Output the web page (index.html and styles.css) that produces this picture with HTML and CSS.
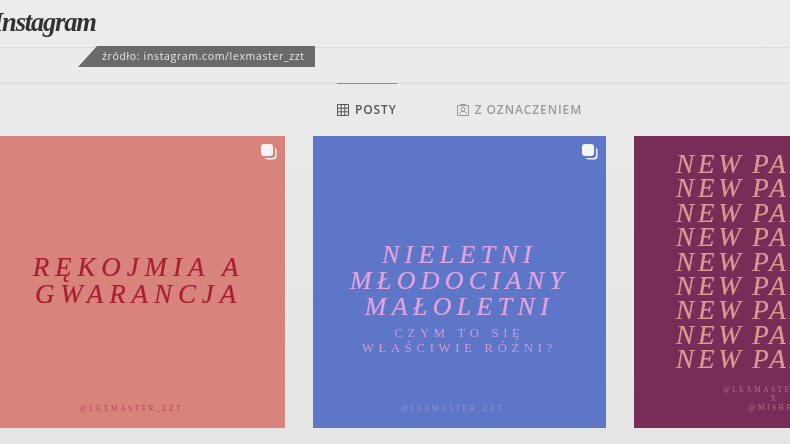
FILE: index.html
```html
<!DOCTYPE html>
<html lang="pl">
<head>
<meta charset="utf-8">
<title>Instagram</title>
<link rel="stylesheet" href="styles.css">
</head>
<body>
<div class="page">
  <header class="topbar"><span class="logo">Instagram</span></header>
  <div class="source">źródło: instagram.com/lexmaster_zzt</div>
  <div class="strip"></div>
  <main class="profile">
    <nav class="tabs">
      <a class="tab active">
        <svg class="tab-icon" viewBox="0 0 12 12"><path d="M.5.5h11v11H.5zM.5 4.2h11M.5 7.8h11M4.2.5v11M7.8.5v11" fill="none" stroke="currentColor"/></svg>
        <span>POSTY</span>
      </a>
      <a class="tab">
        <svg class="tab-icon" viewBox="0 0 12 12"><path d="M.5 1.5h11v10H.5zM3.5 1.5V.5h5v1" fill="none" stroke="currentColor"/><circle cx="6" cy="5.2" r="2" fill="none" stroke="currentColor"/><path d="M2.6 9.8c.6-1.8 1.8-2.4 3.4-2.4s2.8.6 3.4 2.4" fill="none" stroke="currentColor"/></svg>
        <span>Z OZNACZENIEM</span>
      </a>
    </nav>
    <section class="grid">
      <article class="tile tile-red">
        <span class="stack"></span>
        <h2 class="head">RĘKOJMIA A<br>GWARANCJA</h2>
        <p class="handle">@LEXMASTER_ZZT</p>
      </article>
      <article class="tile tile-blue">
        <span class="stack"></span>
        <h2 class="head">NIELETNI<br>MŁODOCIANY<br>MAŁOLETNI</h2>
        <p class="sub">CZYM TO SIĘ<br>WŁAŚCIWIE RÓŻNI?</p>
        <p class="handle">@LEXMASTER_ZZT</p>
      </article>
      <article class="tile tile-plum">
        <h2 class="head">NEW PARTNER<br>NEW PARTNER<br>NEW PARTNER<br>NEW PARTNER<br>NEW PARTNER<br>NEW PARTNER<br>NEW PARTNER<br>NEW PARTNER<br>NEW PARTNER</h2>
        <p class="handle">@LEXMASTER_ZZT<br>X<br>@MISHEL</p>
      </article>
    </section>
  </main>
</div>
</body>
</html>
```
FILE: styles.css
```css
html, body { margin: 0; padding: 0; background: #e8e8e8; }
.page {
  position: relative;
  width: 790px;
  height: 444px;
  overflow: hidden;
  background: linear-gradient(#ececec, #e5e5e5);
  font-family: "Open Sans", sans-serif;
  filter: blur(0.5px);
}
.topbar {
  height: 47px;
  border-bottom: 1px solid #dcdcdc;
  overflow: hidden;
}
.logo {
  display: block;
  margin-left: -7px;
  font-family: "Liberation Serif", serif;
  font-style: italic;
  font-weight: 700;
  font-size: 26.5px;
  line-height: 44px;
  letter-spacing: -1.2px;
  color: #333;
}
.source {
  position: absolute;
  left: 78px;
  top: 46px;
  width: 237px;
  height: 21px;
  box-sizing: border-box;
  padding-left: 24px;
  background: #6a6a6a;
  clip-path: polygon(19px 0, 100% 0, 100% 100%, 0 100%);
  color: #e6e6e6;
  font-size: 10.5px;
  line-height: 20px;
  letter-spacing: 0.65px;
  white-space: nowrap;
}
.strip {
  height: 35px;
  border-bottom: 1px solid #dcdcdc;
}
.profile {
  width: 935px;
  margin-left: -8px;
}
.tabs {
  display: flex;
  justify-content: center;
  gap: 60px;
  height: 52px;
}
.tab {
  display: flex;
  align-items: center;
  gap: 6px;
  height: 52px;
  margin-top: -1px;
  border-top: 1px solid transparent;
  box-sizing: border-box;
  color: #9a9a9a;
  font-size: 12px;
  font-weight: 600;
  letter-spacing: 0.9px;
}
.tab.active {
  color: #555;
  border-top-color: #8a8a8a;
}
.tab-icon { width: 12px; height: 12px; flex: none; }
.grid {
  display: flex;
  gap: 28px;
}
.tile {
  position: relative;
  flex: none;
  width: 293px;
  height: 292px;
  box-sizing: border-box;
  display: flex;
  flex-direction: column;
  align-items: center;
  overflow: hidden;
  font-family: "Liberation Serif", serif;
}
.head {
  margin: 0;
  font-weight: 400;
  font-style: italic;
  text-align: center;
  white-space: nowrap;
  -webkit-text-stroke: 0.2px currentColor;
}
.handle {
  margin: auto 14px 0 0;
  font-size: 7.5px;
  line-height: 9px;
  letter-spacing: 2.4px;
  text-align: center;
  white-space: nowrap;
}
.sub {
  margin: 6px 0 0;
  font-size: 12.5px;
  line-height: 14.5px;
  letter-spacing: 4.8px;
  text-align: center;
  white-space: nowrap;
}
.stack {
  position: absolute;
  top: 8px;
  right: 12px;
  width: 12px;
  height: 12px;
  border-radius: 3px;
  background: #f4f4f4;
  box-shadow: 2px 2px 0 0 var(--bg), 3.5px 3.5px 0 0 rgba(255, 255, 255, 0.9);
}
.tile-red {
  --bg: #d8837b;
  background: var(--bg);
  color: #a81e36;
  padding: 118px 0 15px;
}
.tile-red .head {
  font-size: 27px;
  line-height: 27px;
  letter-spacing: 5.9px;
}
.tile-red .handle { color: #b04c58; }
.tile-blue {
  --bg: #5d76c8;
  background: var(--bg);
  color: #e3a4de;
  padding: 106px 0 15px;
}
.tile-blue .head {
  font-size: 26px;
  line-height: 26px;
  letter-spacing: 5.3px;
}
.tile-blue .sub { color: #cf9bd2; }
.tile-blue .handle { color: #9a90d2; }
.tile-plum {
  --bg: #782d59;
  background: var(--bg);
  color: #d99a90;
  padding: 16px 0 16px 42px;
  align-items: flex-start;
}
.tile-plum .head {
  font-size: 27px;
  line-height: 24.4px;
  letter-spacing: 3.9px;
  word-spacing: -3px;
  text-align: left;
}
.tile-plum .handle {
  margin-left: 47px;
  margin-right: 0;
  color: #b0707f;
}
```
